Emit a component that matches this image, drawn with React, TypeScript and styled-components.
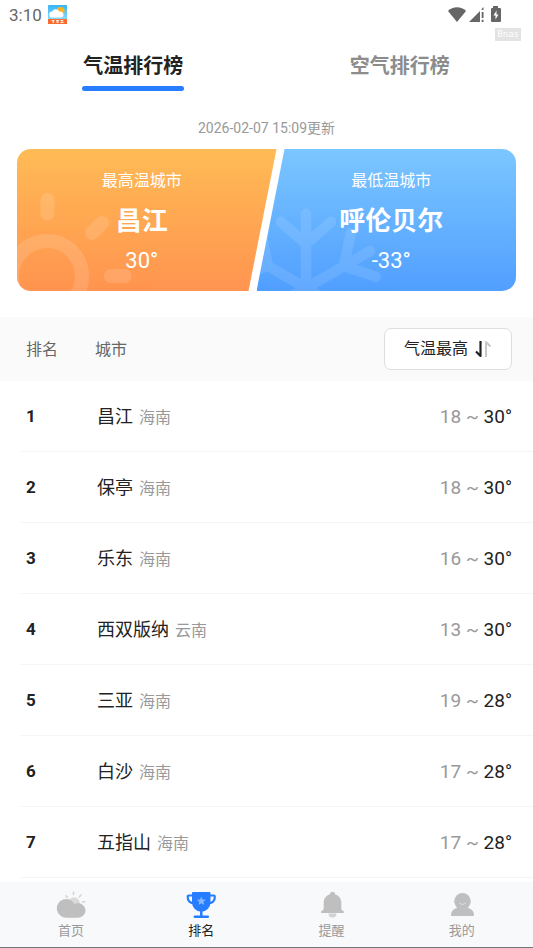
import React, { useState } from "react";
import styled, { createGlobalStyle, css } from "styled-components";

const GlobalStyle = createGlobalStyle`
  *, *::before, *::after { box-sizing: border-box; }
  body {
    margin: 0;
    background: #fff;
    color: #222;
    font-family: Roboto, "Noto Sans CJK SC", sans-serif;
  }
  button { font-family: inherit; cursor: pointer; }
`;

const Page = styled.div`
  display: flex;
  flex-direction: column;
  min-height: 100vh;
`;

const StatusBar = styled.header`
  position: relative;
  display: flex;
  align-items: center;
  gap: 6px;
  height: 30px;
  padding: 0 30px 2px 9px;
  color: #666;
`;

const Clock = styled.time`
  padding-top: 2px;
  font-size: 17px;
  line-height: 20px;
`;

const SystemIcons = styled.div`
  display: flex;
  align-items: center;
  gap: 3px;
  margin-left: auto;
`;

const Watermark = styled.span`
  position: absolute;
  top: 28px;
  right: 12px;
  padding: 0 2px;
  background: #e3e3e3;
  color: #fff;
  font: 9px/13px "DejaVu Sans Mono", monospace;
`;

const Tabs = styled.div`
  display: grid;
  grid-template-columns: 1fr 1fr;
  justify-items: center;
  padding-top: 21px;
`;

const Tab = styled.button<{ $active: boolean }>`
  border: 0;
  padding: 0 1px 6px;
  background: none;
  color: ${(p) => (p.$active ? "#222" : "#8c8c8c")};
  font-size: 20px;
  font-weight: 700;
  line-height: 30px;

  &::after {
    content: "";
    display: block;
    height: 5px;
    margin: 5px -1px 0;
    border-radius: 3px;
    background: ${(p) => (p.$active ? "#267dff" : "transparent")};
  }
`;

const Updated = styled.p`
  margin: 19px 0 0;
  color: #999;
  font-size: 14px;
  line-height: 24px;
  text-align: center;
`;

const Summary = styled.section`
  display: grid;
  grid-template-columns: 1fr 1fr;
  margin: 9px 17px 0;
`;

const hot = css`
  margin-right: -10px;
  padding-right: 10px;
  border-radius: 14px 0 0 14px;
  background: linear-gradient(#ffbb55, #ff9450);
  clip-path: polygon(0 0, 100% 0, calc(100% - 28px) 100%, 0 100%);
`;

const cold = css`
  margin-left: -10px;
  padding-left: 10px;
  border-radius: 0 14px 14px 0;
  background: linear-gradient(#7bc6ff, #519fff);
  clip-path: polygon(28px 0, 100% 0, 100% 100%, 0 100%);
`;

const Extreme = styled.article<{ $kind: "hot" | "cold" }>`
  position: relative;
  display: flex;
  flex-direction: column;
  align-items: center;
  padding-top: 20px;
  padding-bottom: 16px;
  overflow: hidden;
  color: #fff;
  ${(p) => (p.$kind === "hot" ? hot : cold)}
`;

const Ornament = styled.svg`
  position: absolute;
  left: 0;
  bottom: 0;
  fill: none;
  stroke: #fff;
  stroke-linecap: round;
`;

const ExtremeLabel = styled.span`
  position: relative;
  font-size: 16px;
  line-height: 24px;
`;

const ExtremeCity = styled.strong`
  position: relative;
  margin-top: 8px;
  font-size: 26px;
  line-height: 40px;
`;

const ExtremeTemp = styled.span`
  position: relative;
  margin-top: 6px;
  font-size: 22px;
  line-height: 28px;
`;

const Ranking = styled.table`
  width: 100%;
  margin-top: 26px;
  border-collapse: collapse;
`;

const HeadRow = styled.tr`
  height: 64px;
  background: #fafafa;
`;

const HeadCell = styled.th`
  padding: 2px 0 0;
  color: #666;
  font-size: 16px;
  font-weight: 400;
  line-height: 24px;
  text-align: left;

  &:first-child { width: 95px; padding-left: 26px; }
  &:last-child { padding: 0 21px 0 0; text-align: right; }
`;

const SortButton = styled.button`
  display: inline-flex;
  align-items: center;
  gap: 7px;
  height: 42px;
  padding: 0 19px;
  border: 1px solid #dedede;
  border-radius: 7px;
  background: #fff;
  color: #222;
  font-size: 16px;
  line-height: 24px;
  vertical-align: middle;
`;

const Row = styled.tr`
  height: 71px;
  background: linear-gradient(#f4f4f4, #f4f4f4) 21px 100% / 100% 1px no-repeat;
`;

const Cell = styled.td`
  padding: 0;
`;

const RankCell = styled(Cell)`
  padding-bottom: 2px;
  padding-left: 26px;
  font-size: 17px;
  font-weight: 700;
`;

const CityCell = styled(Cell)`
  padding-top: 2px;
  padding-left: 2px;
  font-size: 18px;
  line-height: 26px;
`;

const Province = styled.span`
  margin-left: 6px;
  color: #999;
  font-size: 16px;
`;

const TempCell = styled(Cell)`
  padding-right: 21px;
  font-size: 19px;
  text-align: right;
`;

const Low = styled.span`
  color: #999;
`;

const Nav = styled.nav`
  position: sticky;
  bottom: 0;
  display: grid;
  grid-template-columns: repeat(4, 1fr);
  margin-top: auto;
  padding: 9px 6px 6px;
  border-bottom: 1px solid #757575;
  background: #f8f9fb;
`;

const NavItem = styled.a<{ $active?: boolean }>`
  display: flex;
  flex-direction: column;
  align-items: center;
  gap: 2px;
  color: ${(p) => (p.$active ? "#222" : "#999")};
  font-size: 13px;
  line-height: 20px;
  text-decoration: none;
`;

const AppBadge = () => (
  <svg width="19" height="19" viewBox="0 0 19 19" aria-hidden="true">
    <defs>
      <linearGradient id="sky" x1="0" y1="0" x2="0" y2="1">
        <stop offset="0" stopColor="#35b5f5" />
        <stop offset="1" stopColor="#a5e4ff" />
      </linearGradient>
    </defs>
    <rect width="19" height="19" rx="1" fill="url(#sky)" />
    <circle cx="12.500" cy="6" r="4" fill="#ffb31f" />
    <path d="M4.500 12.500a3 3 0 0 1-.3-6 4 4 0 0 1 7.300.2 3 3 0 0 1 1.800 5.800z" fill="#fff" />
    <rect y="14" width="19" height="5" fill="#fb6b2b" />
    <path d="M3.500 15.500h3M5.500 15v3M4 17h1M8 15.500h3M9.500 15v3M8 17h3M12.500 15.500h3M14 15v3M12.500 17.500h3" stroke="#fff" strokeWidth=".8" />
  </svg>
);

const WifiIcon = () => (
  <svg width="18" height="15" viewBox="0 0 18 15" fill="#666" aria-hidden="true">
    <path d="M9 15 0 4C2.500 1.500 5.500.3 9 .3s6.500 1.200 9 3.700z" />
  </svg>
);

const SignalIcon = () => (
  <svg width="15" height="15" viewBox="0 0 15 15" fill="#666" aria-hidden="true">
    <path d="M11 4v11H0zM12.600 2 14.500 0v3h-1.900zM12.700 5h1.800v6h-1.800zM12.700 12.800h1.800V15h-1.800z" />
  </svg>
);

const BatteryIcon = () => (
  <svg width="16" height="16" viewBox="0 0 16 16" aria-hidden="true">
    <path d="M6 0h5v2h2q1 0 1 1v12q0 1-1 1H5q-1 0-1-1V3q0-1 1-1h1z" fill="#666" />
    <path d="M9.500 4.500 6.500 9.500h2v4l3-5h-2z" fill="#fff" />
  </svg>
);

const SunOrnament = () => (
  <Ornament width="130" height="142" viewBox="0 0 130 142" opacity=".13" strokeWidth="14" aria-hidden="true">
    <circle cx="30" cy="127" r="35" />
    <path d="M30.500 51v13.500M75 84l10-10M94 127h13.500" />
  </Ornament>
);

const SnowOrnament = () => (
  <Ornament width="140" height="142" viewBox="0 0 140 142" opacity=".1" strokeWidth="10.500" aria-hidden="true">
    <path
      d={[0, 60, 120, 240, 300]
        .map((deg) => {
          const a = (deg * Math.PI) / 180;
          const at = (x: number, y: number) =>
            `${(49 + x * Math.cos(a) - y * Math.sin(a)).toFixed(1)} ${(139 + x * Math.sin(a) + y * Math.cos(a)).toFixed(1)}`;
          return `M${at(0, 0)}L${at(0, -74)}M${at(-25, -66)}L${at(0, -44)}L${at(25, -66)}`;
        })
        .join("")}
    />
  </Ornament>
);

const SortIcon = () => (
  <svg width="17" height="18" viewBox="0 0 17 18" fill="none" aria-hidden="true">
    <path d="M5.500 1v15L1 11.500" stroke="#222" strokeWidth="2.200" strokeLinejoin="round" />
    <path d="M11 17V2l4.500 4.500" stroke="#c8c8c8" strokeWidth="2" strokeLinejoin="round" />
  </svg>
);

const HomeIcon = () => (
  <svg width="30" height="28" viewBox="0 0 30 28" aria-hidden="true">
    <path d="M17.500 1v2.500M25 4l-1.700 2M29 10.500l-2.500.5M9.800 4.800l1.700 1.600" stroke="#d4d4d4" strokeWidth="1.500" strokeLinecap="round" />
    <circle cx="18" cy="12" r="5.800" fill="#dadada" />
    <path d="M10.300 26.700a9.350 9.350 0 1 1 8.200-13.600 7.300 7.300 0 1 1 3.700 13.600z" fill="#bfbfbf" />
  </svg>
);

const TrophyIcon = () => (
  <svg width="30" height="28" viewBox="0 0 30 28" aria-hidden="true">
    <path d="M7 4.500H2.500q-.7 0-.7.700V7q0 4.500 6 5.300M23.500 4.500H28q.7 0 .7.700V7q0 4.500-6 5.300" fill="none" stroke="#267dff" strokeWidth="2.200" />
    <path d="M7 1h16.500q1 0 1 1v9.500a9.250 9.250 0 0 1-18.500 0V2q0-1 1-1z" fill="#267dff" />
    <path d="M15.300 20v5M8.800 25.700h13" stroke="#267dff" strokeWidth="2.500" strokeLinecap="round" />
    <path d="m15.300 5.500 1.300 2.900 3.200.3-2.400 2.100.7 3.200-2.800-1.700-2.800 1.700.7-3.200-2.400-2.100 3.200-.3z" fill="#86b7ff" />
  </svg>
);

const BellIcon = () => (
  <svg width="30" height="28" viewBox="0 0 30 28" aria-hidden="true">
    <path d="M11.500 22.500h8a4 4 0 0 1-8 0z" fill="#d2d2d2" />
    <path d="M13 3.300a2.500 2.500 0 0 1 5 0c4 1.200 6.300 4.400 6.300 8.500V18c0 1.200 2.700 1.800 2.700 3 0 .7-.4 1-1 1H5c-.6 0-1-.3-1-1 0-1.200 2.700-1.800 2.700-3v-6.200c0-4.100 2.300-7.300 6.300-8.500z" fill="#bfbfbf" />
  </svg>
);

const UserIcon = () => (
  <svg width="30" height="28" viewBox="0 0 30 28" aria-hidden="true">
    <circle cx="15.500" cy="10.300" r="8.300" fill="#bfbfbf" />
    <path d="M4 23.500c0-3.500 4-6.700 7.500-6.700h8c3.500 0 7.500 3.200 7.500 6.700 0 1-.4 1.500-1.300 1.500H5.300C4.400 25 4 24.500 4 23.500z" fill="#bfbfbf" />
    <path d="M12.700 12.500q2.800 2.300 5.600 0" fill="none" stroke="#e0e0e0" strokeWidth="1" strokeLinecap="round" />
  </svg>
);

const cities = [
  { name: "昌江", province: "海南", low: 18, high: 30 },
  { name: "保亭", province: "海南", low: 18, high: 30 },
  { name: "乐东", province: "海南", low: 16, high: 30 },
  { name: "西双版纳", province: "云南", low: 13, high: 30 },
  { name: "三亚", province: "海南", low: 19, high: 28 },
  { name: "白沙", province: "海南", low: 17, high: 28 },
  { name: "五指山", province: "海南", low: 17, high: 28 },
];

const navItems = [
  { label: "首页", Icon: HomeIcon },
  { label: "排名", Icon: TrophyIcon },
  { label: "提醒", Icon: BellIcon },
  { label: "我的", Icon: UserIcon },
];

export default function App() {
  const [tab, setTab] = useState(0);
  return (
    <Page lang="zh-CN">
      <GlobalStyle />
      <StatusBar>
        <Clock>3:10</Clock>
        <AppBadge />
        <SystemIcons>
          <WifiIcon />
          <SignalIcon />
          <BatteryIcon />
        </SystemIcons>
        <Watermark>Bnas</Watermark>
      </StatusBar>
      <Tabs role="tablist">
        {["气温排行榜", "空气排行榜"].map((label, i) => (
          <Tab key={label} role="tab" aria-selected={tab === i} $active={tab === i} onClick={() => setTab(i)}>
            {label}
          </Tab>
        ))}
      </Tabs>
      <Updated>2026-02-07 15:09更新</Updated>
      <Summary>
        <Extreme $kind="hot">
          <SunOrnament />
          <ExtremeLabel>最高温城市</ExtremeLabel>
          <ExtremeCity>昌江</ExtremeCity>
          <ExtremeTemp>30°</ExtremeTemp>
        </Extreme>
        <Extreme $kind="cold">
          <SnowOrnament />
          <ExtremeLabel>最低温城市</ExtremeLabel>
          <ExtremeCity>呼伦贝尔</ExtremeCity>
          <ExtremeTemp>-33°</ExtremeTemp>
        </Extreme>
      </Summary>
      <Ranking>
        <thead>
          <HeadRow>
            <HeadCell scope="col">排名</HeadCell>
            <HeadCell scope="col">城市</HeadCell>
            <HeadCell scope="col">
              <SortButton>
                气温最高
                <SortIcon />
              </SortButton>
            </HeadCell>
          </HeadRow>
        </thead>
        <tbody>
          {cities.map((city, i) => (
            <Row key={city.name}>
              <RankCell>{i + 1}</RankCell>
              <CityCell>
                {city.name}
                <Province>{city.province}</Province>
              </CityCell>
              <TempCell>
                <Low>{city.low} ~ </Low>
                {city.high}°
              </TempCell>
            </Row>
          ))}
        </tbody>
      </Ranking>
      <Nav>
        {navItems.map(({ label, Icon }) => (
          <NavItem key={label} href="#" $active={label === "排名"}>
            <Icon />
            {label}
          </NavItem>
        ))}
      </Nav>
    </Page>
  );
}
